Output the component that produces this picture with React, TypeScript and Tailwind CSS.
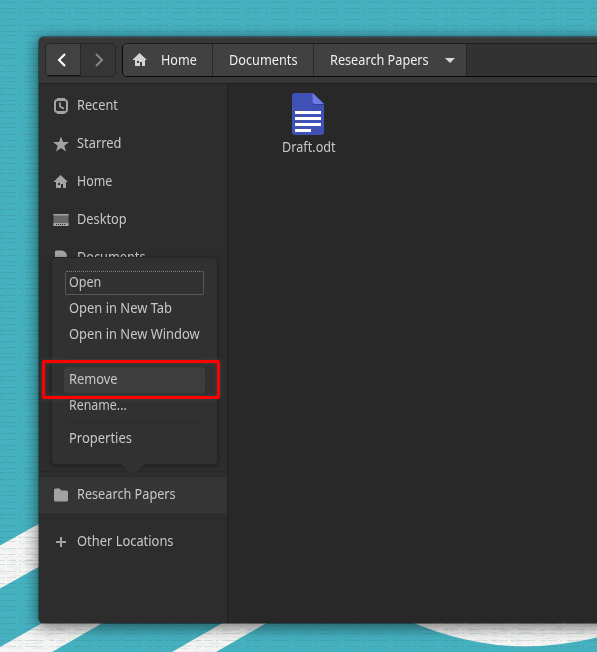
import React, { useLayoutEffect, useRef } from "react";

/* Text condensed horizontally so that it fills a given width. */
function Label({ w, children, className = "" }: { w: number; children: string; className?: string }) {
  const ref = useRef<HTMLSpanElement>(null);
  useLayoutEffect(() => {
    const el = ref.current;
    if (el) el.style.transform = `scaleX(${w / el.offsetWidth})`;
  }, [w]);
  return (
    <span className={`block shrink-0 whitespace-nowrap ${className}`} style={{ width: w }}>
      <span ref={ref} className="inline-block origin-left">{children}</span>
    </span>
  );
}

function HomeIcon() {
  return (
    <svg width="16" height="16" viewBox="0 0 16 16" fill="currentColor">
      <path fillRule="evenodd" d="M7.500 1 14.500 7.500V8H13v6h-3v-4H8v4H3V8H.8v-.5zM5 9v2h2V9z" />
    </svg>
  );
}
function RecentIcon() {
  return (
    <svg width="16" height="16" viewBox="0 0 16 16" fill="none" stroke="currentColor">
      <rect x="2" y="2" width="12" height="12" rx="2.500" strokeWidth="2" />
      <path d="M4 .8h8M4 15.200h8" strokeWidth="1.500" />
      <path d="M7 4.500V8.500l4 2.200" strokeWidth="1.800" />
    </svg>
  );
}
function StarIcon() {
  return (
    <svg width="16" height="16" viewBox="0 0 16 16" fill="currentColor">
      <path d="m8 .5 2 5.500 6 .1-4.700 3.600 1.700 5.800L8 12.100l-5 3.400 1.700-5.800L0 6.100 6 6z" />
    </svg>
  );
}
function DesktopIcon() {
  return (
    <svg width="16" height="16" viewBox="0 0 16 16" fill="currentColor">
      <path d="M.5 2h15v12H.5z" opacity=".5" />
      <path d="M.5 2h15v1.500H.5zM.5 11h15v3H.5z" />
      <path d="M3 12.500h10" stroke="#2d2d2d" strokeDasharray="1 1" />
    </svg>
  );
}
function DocumentIcon() {
  return (
    <svg width="16" height="16" viewBox="0 0 16 16" fill="currentColor">
      <path d="M3 .5h6q5 1.500 5 6V15H2V1.500z" />
    </svg>
  );
}
function FolderIcon() {
  return (
    <svg width="16" height="16" viewBox="0 0 16 16" fill="currentColor">
      <path d="M2.500 1.500H6q1 0 1.500 1l.5 1h5.500q1.500 0 1.500 1.500v8q0 1.500-1.500 1.500h-11Q1 14.500 1 13V3q0-1.500 1.500-1.500z" />
    </svg>
  );
}
function PlusIcon() {
  return (
    <svg width="16" height="16" viewBox="0 0 16 16" stroke="currentColor" strokeWidth="2">
      <path d="M8 3v10M3 8h10" />
    </svg>
  );
}

function Wallpaper() {
  return (
    <svg className="absolute inset-0" width="597" height="652">
      <defs>
        <filter id="weave" x="0" y="0" width="100%" height="100%">
          <feTurbulence type="fractalNoise" baseFrequency="0.09 0.6" numOctaves="2" seed="4" />
          <feColorMatrix values="0 0 0 0 0.15  0 0 0 0 0.3  0 0 0 0 0.3  0.900 0 0 0 -0.400" />
        </filter>
        <pattern id="threads" width="197" height="23" patternUnits="userSpaceOnUse">
          <path d="M0 2.500h197M0 8.500h197M0 12.500h197M0 19.500h197" stroke="#24555c" strokeOpacity=".13" strokeDasharray="5 2 9 3 2 4 14 1 3 6" />
        </pattern>
      </defs>
      <path fill="#44b2c1" d="M0 0h597v652H0z" />
      <path
        fill="#f6f6f5"
        d="M0 545.500 60 512v43L0 588.500zM0 647l60-34h60L52 652H0zM172 652l68-39h44l-68 39z"
      />
      <path fill="#f6f6f5" d="M390 612Q457 646 525 646.500 562 646 597 637.500V612z" />
      <path filter="url(#weave)" opacity=".45" d="M0 0h597v652H0z" />
      <path fill="url(#threads)" d="M0 0h597v652H0z" />
    </svg>
  );
}

function Place({ icon, label, w, className = "h-[38px]" }: { icon: React.ReactNode; label: string; w: number; className?: string }) {
  return (
    <div className={`flex items-center gap-2 pl-[14px] ${className}`}>
      <span className="mt-[2px] text-[#a3a3a3]">{icon}</span>
      <Label w={w}>{label}</Label>
    </div>
  );
}

function MenuItem({ label, w, className = "" }: { label: string; w: number; className?: string }) {
  return (
    <div className={`flex h-[26px] items-center pl-[5px] ${className}`}>
      <Label w={w} className="-mt-[2px]">{label}</Label>
    </div>
  );
}

function ContextMenu() {
  return (
    <div className="absolute left-[12px] top-[220px] h-[208px] w-[167px] rounded-[5px] border border-[#252525] bg-[#313131] px-[12px] pt-[12px] shadow-[0_1px_4px_rgba(0,0,0,0.35)]">
      <div className="relative">
        <MenuItem label="Open" w={32.5} />
        <div className="absolute left-px top-[1px] h-[24px] w-[139px] rounded-[2px] border border-dotted border-[#808080]" />
      </div>
      <MenuItem label="Open in New Tab" w={103} />
      <MenuItem label="Open in New Window" w={131} />
      <div className="mx-[3px] mb-[9px] mt-[9px] h-px bg-[#2a2a2a]" />
      <MenuItem label="Remove" w={48.5} className="w-[141px] rounded-[4px] bg-[#3e3e3e]" />
      <MenuItem label="Rename..." w={58} />
      <div className="mx-[3px] mb-[3px] mt-[3px] h-px bg-[#2a2a2a]" />
      <MenuItem label="Properties" w={62.5} />
      <svg className="absolute left-[69px] top-[206px]" width="24" height="12" viewBox="0 0 24 12">
        <path d="M0 0h24L12 10.500z" fill="#313131" />
      </svg>
    </div>
  );
}

export default function App() {
  return (
    <div className="relative h-[652px] w-[597px] overflow-hidden pl-[39px] pt-[37px] font-['Noto_Sans',sans-serif] text-[14.300px] leading-[20px] text-[#c8c8c8]">
      <Wallpaper />
      <div className="relative flex h-[586px] w-[600px] flex-col rounded-[5px] bg-[#282828] shadow-[0_0_0_1px_rgba(0,0,0,0.35),0_3px_14px_2px_rgba(0,0,0,0.5)]">
        <div className="flex h-[47px] shrink-0 gap-[6px] rounded-tl-[5px] border-b border-t border-b-[#202020] border-t-[#474747] bg-[#373737] pl-[6px] pt-[5px]">
          <div className="flex h-[34px] w-[71px] overflow-hidden rounded-[5px] border border-[#262626]">
            <div className="flex w-[35px] items-center justify-center border-b border-r border-b-[#111] border-r-[#262626] bg-[#424242] text-white">
              <svg className="-ml-[3px]" width="16" height="16" viewBox="0 0 16 16" fill="none" stroke="currentColor" strokeWidth="2.100"><path d="M11 2 5 8l6 6" /></svg>
            </div>
            <div className="flex flex-1 items-center justify-center bg-[#363636] text-[#888]">
              <svg width="16" height="16" viewBox="0 0 16 16" fill="none" stroke="currentColor" strokeWidth="2"><path d="m6 2 6 6-6 6" /></svg>
            </div>
          </div>
          <div className="flex h-[34px] flex-1 overflow-hidden rounded-l-[5px] border border-b-[#080808] border-l-[#080808] border-t-[#1e1e1e] bg-[#323232] text-[#eeeeee]">
            <div className="flex w-[90px] items-center gap-[13px] border-r border-[#292929] bg-[#414141] pl-[9px]">
              <span className="text-[#d4d4d4]"><HomeIcon /></span>
              <Label w={36}>Home</Label>
            </div>
            <div className="flex w-[101px] items-center border-r border-[#292929] bg-[#414141] pl-[16px]">
              <Label w={68.500}>Documents</Label>
            </div>
            <div className="flex w-[153px] items-center gap-[16px] border-r border-[#252525] bg-[#414141] pl-[16px]">
              <Label w={98.500}>Research Papers</Label>
              <svg className="mt-[2px]" width="12" height="6" viewBox="0 0 12 6"><path d="M0 0h10L5 5z" fill="#d8d8d8" /></svg>
            </div>
          </div>
        </div>
        <div className="flex min-h-0 flex-1">
          <div className="flex w-[189px] flex-col rounded-bl-[5px] border-r border-[#202020] bg-[#2d2d2d] pt-[2px]">
            <Place icon={<RecentIcon />} label="Recent" w={41} />
            <Place icon={<StarIcon />} label="Starred" w={44} />
            <Place icon={<HomeIcon />} label="Home" w={35.500} />
            <Place icon={<DesktopIcon />} label="Desktop" w={50} />
            <Place icon={<DocumentIcon />} label="Documents" w={68.500} />
            <div className="mb-[5px] mt-[195px] h-px bg-[#272727]" />
            <Place icon={<FolderIcon />} label="Research Papers" w={98.500} className="h-[36px] bg-[#353535] pb-[2px]" />
            <div className="mb-[3px] mt-[5px] h-px bg-[#272727]" />
            <Place icon={<PlusIcon />} label="Other Locations" w={96.500} />
          </div>
          <div className="pl-[54px] pt-[8px]">
            <div className="flex w-[54px] flex-col gap-px">
              <svg className="ml-[9px]" width="34" height="44" viewBox="0 0 34 44">
                <path d="M4 1h18l11 11v28q0 3-3 3H4q-3 0-3-3V4q0-3 3-3z" fill="#3f51b5" />
                <path d="M21.500 1v9.500q0 2.500 2.500 2.500h9v-1L22 1z" fill="#303f9f" />
                <path d="M21.500 1 33 12h-9q-2.500 0-2.500-2.500z" fill="#6c7be3" />
                <path d="M4 20.500h26M4 26.500h26M4 32.500h26M4 38.500h16" stroke="#fff" strokeWidth="3" />
              </svg>
              <Label w={54}>Draft.odt</Label>
            </div>
          </div>
        </div>
        <ContextMenu />
        <div className="absolute left-[3px] top-[323px] h-[39px] w-[178px] rounded-[2px] border-[3px] border-[#ff0000] shadow-[0_0_5px_rgba(80,75,75,0.6),inset_0_0_5px_rgba(80,75,75,0.6)]" />
      </div>
    </div>
  );
}
